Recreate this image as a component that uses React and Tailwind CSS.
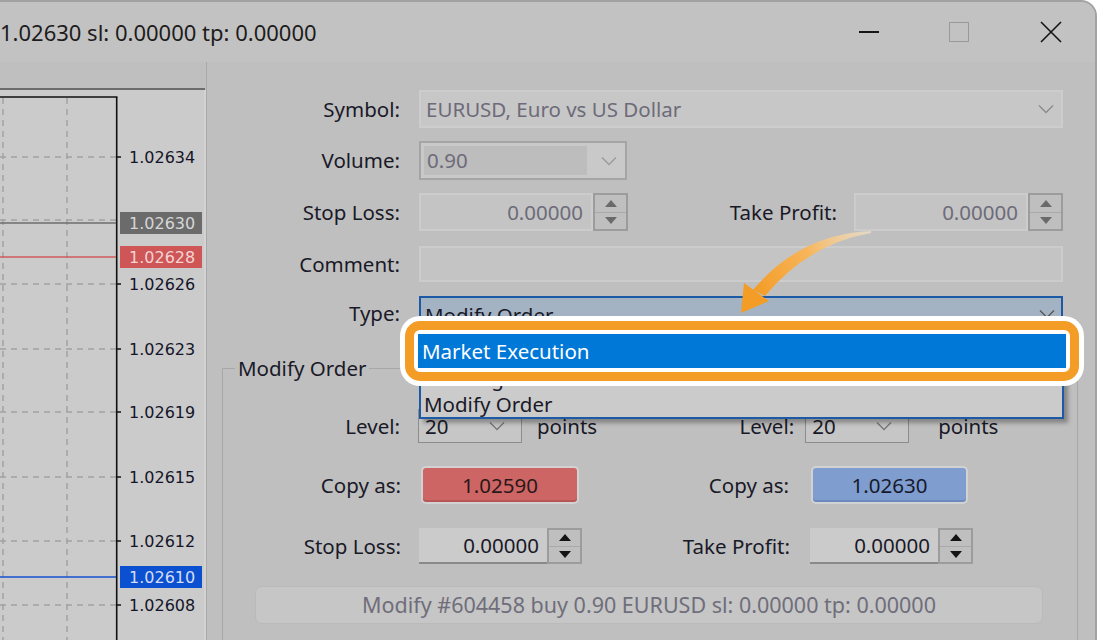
import React from 'react';

const ui = { fontFamily: '"Noto Sans", "Liberation Sans", sans-serif' };

const ticks = [
  { y: 157, v: '1.02634' },
  { y: 284, v: '1.02626' },
  { y: 349, v: '1.02623' },
  { y: 412, v: '1.02619' },
  { y: 477, v: '1.02615' },
  { y: 541, v: '1.02612' },
  { y: 605, v: '1.02608' },
];

const marks = [
  { y: 223, v: '1.02630', bg: '#6b6b6b', fg: '#d6d6d6', line: '#6e6e6e' },
  { y: 257, v: '1.02628', bg: '#cf5656', fg: '#f2d4d4', line: '#d05a5a' },
  { y: 577, v: '1.02610', bg: '#0b50d0', fg: '#d4def6', line: '#1352cf' },
];

function Chart() {
  return (
    <svg width="207" height="578" viewBox="0 62 207 578" className="block shrink-0">
      <rect x="0" y="62" width="207" height="578" fill="#bfbfbf" />
      <rect x="0" y="88" width="205" height="2" fill="#6c6c6c" />
      <rect x="0" y="90" width="205" height="550" fill="#cbcbcb" />
      <rect x="204" y="90" width="2" height="550" fill="#d3d3d3" />
      <rect x="206" y="62" width="1" height="578" fill="#a9a9a9" />
      <line x1="3" y1="98" x2="3" y2="640" stroke="#a3a3a3" strokeWidth="1.5" strokeDasharray="6 5" />
      <line x1="67" y1="98" x2="67" y2="640" stroke="#a3a3a3" strokeWidth="1.5" strokeDasharray="6 5" />
      {[...ticks.map(t => t.y), 220].map(y => (
        <line key={y} x1="0" y1={y} x2="116" y2={y} stroke="#a3a3a3" strokeWidth="1.5" strokeDasharray="6 5" />
      ))}
      <line x1="0" y1="97" x2="117.5" y2="97" stroke="#111" strokeWidth="1.6" />
      <line x1="116.7" y1="97" x2="116.7" y2="640" stroke="#111" strokeWidth="1.6" />
      {ticks.map(t => (
        <g key={t.v}>
          <line x1="117" y1={t.y} x2="121" y2={t.y} stroke="#111" strokeWidth="1.5" />
          <text x="129" y={t.y + 6} fontSize="16" fill="#15152a" fontFamily="DejaVu Sans, sans-serif">{t.v}</text>
        </g>
      ))}
      {marks.map(m => (
        <g key={m.v}>
          <line x1="0" y1={m.y} x2="116" y2={m.y} stroke={m.line} strokeWidth="1.6" />
          <rect x="120" y={m.y - 11} width="82" height="22" fill={m.bg} />
          <text x="129" y={m.y + 6} fontSize="16" fill={m.fg} fontFamily="DejaVu Sans, sans-serif">{m.v}</text>
        </g>
      ))}
    </svg>
  );
}

function Chevron({ color = '#8a8a8a' }) {
  return (
    <svg width="16" height="10" viewBox="0 0 16 10" className="shrink-0">
      <path d="M1 1.5 L8 8.5 L15 1.5" fill="none" stroke={color} strokeWidth="1.3" />
    </svg>
  );
}

function Spinner({ dark }) {
  const c = dark ? '#141414' : '#6a6a6a';
  return (
    <div className="w-[35px] h-full border-2 border-[#9c9c9c] flex flex-col shrink-0">
      <div className="flex-1 flex items-center justify-center border-b border-[#a9a9a9]">
        <svg width="12" height="7" viewBox="0 0 12 7"><path d="M6 0 L12 7 L0 7 Z" fill={c} /></svg>
      </div>
      <div className="flex-1 flex items-center justify-center">
        <svg width="12" height="7" viewBox="0 0 12 7"><path d="M0 0 L12 0 L6 7 Z" fill={c} /></svg>
      </div>
    </div>
  );
}

function Label({ children, w }) {
  return <span className={`${w} text-right shrink-0 text-[#191927] whitespace-nowrap`}>{children}</span>;
}

export default function App() {
  return (
    <div className="relative w-[1100px] h-[640px] overflow-hidden bg-white text-[20.5px] leading-none" style={ui}>
      <div className="w-[1097px] h-[640px] flex flex-col bg-[#bfbfbf] border-t-2 border-r-2 border-[#a2a2a2] rounded-tr-[16px] overflow-hidden">
        {/* title bar */}
        <div className="h-[60px] shrink-0 bg-[#c3c2c2] flex items-center">
          <span className="text-[22px] text-[#1c1c1c] whitespace-nowrap">1.02630 sl: 0.00000 tp: 0.00000</span>
          <div className="ml-auto flex items-center">
            <div className="w-[20px] h-[1.5px] bg-[#161616]" />
            <div className="ml-[70px] w-[20px] h-[20px] border-[1.5px] border-[#999]" />
            <svg width="22" height="22" viewBox="0 0 22 22" className="ml-[71px] mr-[33px]">
              <path d="M1 1 L21 21 M21 1 L1 21" stroke="#141414" strokeWidth="1.6" />
            </svg>
          </div>
        </div>

        <div className="flex flex-1 min-h-0">
          <Chart />

          {/* form */}
          <div className="flex-1 pt-[28px]">
            <div className="flex items-center h-[38px]">
              <Label w="w-[193px]">Symbol:</Label>
              <div className="ml-[19px] w-[644px] h-full bg-[#c7c7c7] border-2 border-[#cdcdcd] flex items-center px-[5px] text-[#6d6b79]">
                <span>EURUSD, Euro vs US Dollar</span>
                <span className="ml-auto mr-[2px]"><Chevron /></span>
              </div>
            </div>

            <div className="flex items-center h-[39px] mt-[13px]">
              <Label w="w-[193px]">Volume:</Label>
              <div className="ml-[19px] w-[208px] h-full border-2 border-[#a5a5a5] bg-[#c9c9c9] flex items-center p-[3px]">
                <div className="w-[163px] h-full bg-[#bdbdbd] flex items-center px-[3px] text-[#6d6b79]">0.90</div>
                <span className="ml-auto mr-[5px]"><Chevron color="#9a9a9a" /></span>
              </div>
            </div>

            <div className="flex items-center h-[38px] mt-[13px]">
              <Label w="w-[193px]">Stop Loss:</Label>
              <div className="ml-[19px] w-[174px] h-full bg-[#c4c4c4] border-2 border-[#cccccc] flex items-center justify-end pr-[8px] text-[#6d6b79]">0.00000</div>
              <Spinner />
              <Label w="w-[209px]">Take Profit:</Label>
              <div className="ml-[17px] w-[174px] h-full bg-[#c4c4c4] border-2 border-[#cccccc] flex items-center justify-end pr-[8px] text-[#6d6b79]">0.00000</div>
              <Spinner />
            </div>

            <div className="flex items-center h-[36px] mt-[15px]">
              <Label w="w-[193px]">Comment:</Label>
              <div className="ml-[19px] w-[644px] h-full bg-[#c4c4c4] border-2 border-[#cccccc]" />
            </div>

            <div className="flex items-center h-[35px] mt-[14px]">
              <Label w="w-[193px]">Type:</Label>
              <div className="ml-[19px] w-[644px] h-full bg-[#a4b3c3] border-2 border-[#1d5aa6] flex items-center px-[4px] text-[#191927]">
                <span className="mt-[4px]">Modify Order</span>
                <span className="ml-auto mr-[2px]"><Chevron color="#555" /></span>
              </div>
            </div>

            <fieldset className="mt-[24px] ml-[15px] w-[856px] h-[300px] border border-[#a8a8a8]">
              <legend className="ml-[12px] px-[3px] text-[#191927] leading-[26px]">Modify Order</legend>

              <div className="flex items-center h-[34px] mt-[28px]">
                <Label w="w-[177px]">Level:</Label>
                <div className="ml-[18px] w-[104px] h-full border border-[#8c8c8c] bg-[#c6c6c6] flex items-center px-[6px] text-[#191927]">
                  <span>20</span>
                  <span className="ml-auto mr-[10px]"><Chevron color="#777" /></span>
                </div>
                <span className="ml-[15px] text-[#191927]">points</span>
                <Label w="w-[197px]">Level:</Label>
                <div className="ml-[11px] w-[104px] h-full border border-[#8c8c8c] bg-[#c6c6c6] flex items-center px-[6px] text-[#191927]">
                  <span>20</span>
                  <span className="ml-auto mr-[10px]"><Chevron color="#777" /></span>
                </div>
                <span className="ml-[29px] text-[#191927]">points</span>
              </div>

              <div className="flex items-center h-[38px] mt-[23px]">
                <Label w="w-[178px]">Copy as:</Label>
                <div className="ml-[20px] w-[158px] h-full rounded-[5px] border-2 border-[#d2d2d2] bg-[#cd6565] shadow-[inset_0_-2px_0_#b65656] flex items-center justify-center text-[#2a1818]">1.02590</div>
                <Label w="w-[210px]">Copy as:</Label>
                <div className="ml-[22px] w-[157px] h-full rounded-[5px] border-2 border-[#d2d2d2] bg-[#7f9dcf] shadow-[inset_0_-2px_0_#6c8ac0] flex items-center justify-center text-[#161a2c]">1.02630</div>
              </div>

              <div className="flex items-center h-[36px] mt-[24px]">
                <Label w="w-[178px]">Stop Loss:</Label>
                <div className="ml-[18px] w-[128px] h-full bg-[#cbcbcb] border-b-2 border-[#8a8a8a] flex items-center justify-end pr-[8px] text-[#191927]">0.00000</div>
                <Spinner dark />
                <Label w="w-[208px]">Take Profit:</Label>
                <div className="ml-[20px] w-[128px] h-full bg-[#cbcbcb] border-b-2 border-[#8a8a8a] flex items-center justify-end pr-[8px] text-[#191927]">0.00000</div>
                <Spinner dark />
              </div>

              <div className="ml-[32px] mt-[22px] w-[788px] h-[38px] rounded-[7px] bg-[#c6c6c6] border border-[#bababa] flex items-center justify-center text-[21.5px] text-[#6f6e7a] whitespace-nowrap">
                Modify #604458 buy 0.90 EURUSD sl: 0.00000 tp: 0.00000
              </div>
            </fieldset>
          </div>
        </div>
      </div>

      {/* open dropdown list */}
      <div className="absolute left-[419px] top-[330px] w-[645px] h-[89px] bg-[#cbcbcb] border-2 border-[#1d5aa6] shadow-[4px_4px_4px_rgba(0,0,0,0.3)] flex flex-col text-[#191927]">
        <div className="h-[5px]" />
        <div className="h-[28px] bg-[#0078d7] text-white flex items-center px-[3px]">Market Execution</div>
        <div className="h-[27px] flex items-center px-[3px]">Pending Order</div>
        <div className="h-[25px] flex items-center px-[3px]">Modify Order</div>
      </div>

      {/* highlight frame */}
      <div className="absolute left-[400px] top-[316px] w-[684px] h-[70px] rounded-[20px] bg-white p-[5px]">
        <div className="w-full h-full rounded-[15px] border-[9px] border-[#f39c26] bg-white p-[4px]">
          <div className="w-full h-full bg-[#0078d7] text-white flex items-center px-[4px]">Market Execution</div>
        </div>
      </div>

      {/* pointer arrow */}
      <svg className="absolute left-0 top-0 pointer-events-none" width="1100" height="640">
        <defs>
          <linearGradient id="ag" x1="870" y1="232" x2="755" y2="292" gradientUnits="userSpaceOnUse">
            <stop offset="0" stopColor="#fde7c4" stopOpacity="0.6" />
            <stop offset="0.5" stopColor="#f7b55a" />
            <stop offset="1" stopColor="#f39c26" />
          </linearGradient>
        </defs>
        <path d="M871 231 Q800 234 753 290 L765 296 Q808 244 871 233 Z" fill="url(#ag)" />
        <path d="M741 313 L744 283 L769 301 Z" fill="#f39c26" />
      </svg>
    </div>
  );
}
